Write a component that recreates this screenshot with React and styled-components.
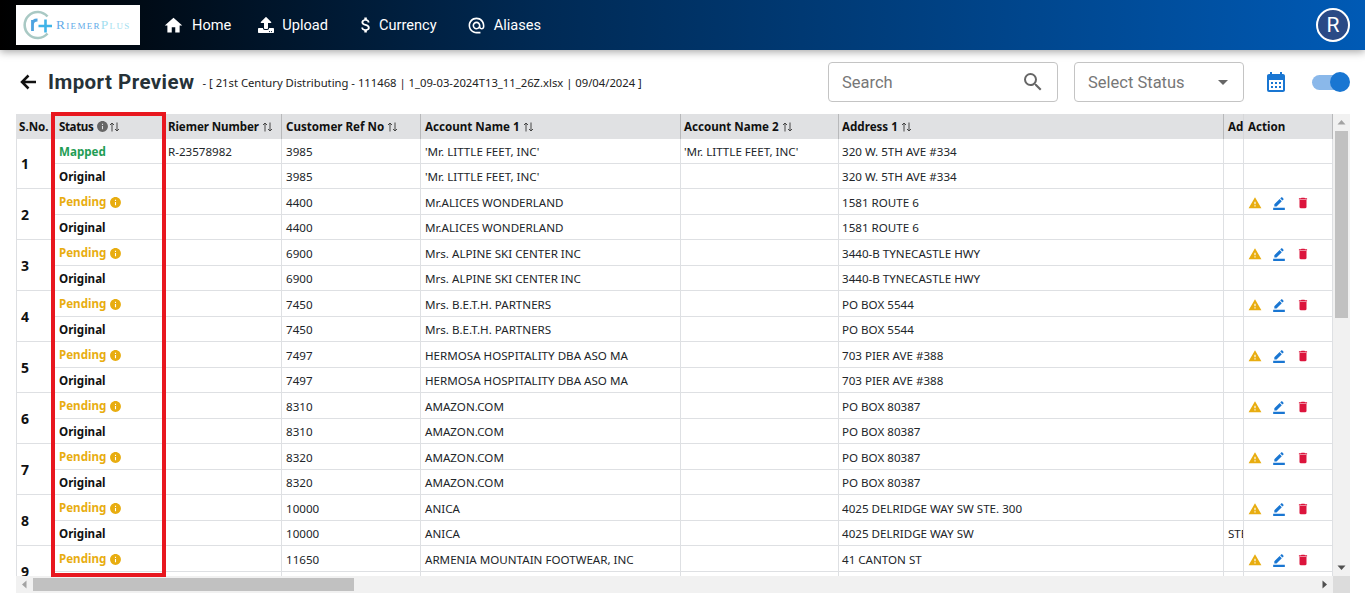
import React from "react";
import styled, { createGlobalStyle } from "styled-components";
import { FaUpload } from "react-icons/fa";
import {
  MdHome, MdAttachMoney, MdAlternateEmail, MdSearch, MdCalendarMonth,
  MdWarning, MdBorderColor, MdDelete, MdInfo, MdArrowDropDown,
} from "react-icons/md";

const Global = createGlobalStyle`
  html, body { margin: 0; padding: 0; background: #fff; overflow: hidden; height: 598px; }
  * { box-sizing: border-box; }
  body { font-family: Roboto, "Liberation Sans", sans-serif; }
`;

const Page = styled.div`display:flex;flex-direction:column;height:598px;`;

const NavBar = styled.header`
  height: 50px; flex: none; display: flex; align-items: center; padding: 0 16px;
  background: linear-gradient(to right, #000 0%, #002a55 40%, #003a75 60%, #005ab5 100%);
  box-shadow: 0 2px 8px rgba(0,0,0,.35); position: relative; z-index: 5;
`;
const LogoBox = styled.div`
  width: 124px; height: 40px; background: #fff; display: flex; align-items: center; gap: 3px; padding-left: 7px;
`;
const LogoText = styled.span`
  font-family: "Liberation Serif", serif; font-size: 13.5px; font-variant: small-caps; letter-spacing: 1.3px; color: #62aae8; white-space: nowrap;
  b { font-weight: 400; color: #a3deef; }
`;
const NavLinks = styled.nav`display:flex;align-items:center;margin-left:23px;flex:1;`;
const NavLink = styled.a`
  display:flex;align-items:center;gap:${p => p.$gap}px;color:#fff;font-size:14.6px;margin-right:${p => p.$mr}px;
  svg { display:block; }
`;
const Avatar = styled.div`
  width: 34px; height: 34px; border-radius: 50%; border: 2px solid #fff; background: #2a4a86; color: #fff;
  display:flex;align-items:center;justify-content:center;font-size:21px;margin-right:-1px;
`;

const TitleRow = styled.div`
  height: 64px; flex: none; display:flex;align-items:center;padding: 0 15px 0 19px;
`;
const Back = styled.svg`display:block;margin-right:11px;flex:none;`;
const Title = styled.h1`margin:0;font-size:20.5px;font-weight:700;color:#263238;letter-spacing:.44px;`;
const Crumb = styled.span`font-family:"Noto Sans",sans-serif;font-size:11.26px;color:#222;margin-left:8px;flex:1;white-space:nowrap;`;
const Field = styled.div`
  width:${p => p.$w}px;height:40px;border:1px solid #c4c4c4;border-radius:4px;display:flex;align-items:center;
  padding:0 ${p => p.$pr}px 0 13px;margin-right:${p => p.$mr}px;color:#777;font-size:16.5px;justify-content:space-between;
  svg{display:block;}
`;
const CalIcon = styled.span`display:flex;color:#1976d2;margin-right:24px;`;
const Toggle = styled.div`width:38px;height:20px;position:relative;`;
const Track = styled.div`position:absolute;left:0;right:3px;top:2.5px;height:15px;border-radius:8px;background:#8ab8ea;`;
const Knob = styled.div`position:absolute;right:0;top:0;width:20px;height:20px;border-radius:50%;background:#1976d2;`;

const TableWrap = styled.div`
  position:relative;margin-left:16px;width:1334px;flex:none;
  display:grid;grid-template-columns:1317px 17px;grid-template-rows:462px 17px;
`;
const Viewport = styled.div`overflow:hidden;`;
const VBar = styled.div`display:flex;flex-direction:column;background:#f1f1f1;`;
const HBar = styled.div`display:flex;background:#f1f1f1;`;
const Corner = styled.div`background:#dcdcdc;`;
const BarBtn = styled.div`flex:none;width:17px;height:17px;display:flex;align-items:center;justify-content:center;`;
const VThumb = styled.div`flex:none;height:${p => p.$size}px;margin:0 2px;background:#c1c1c1;`;
const HThumb = styled.div`flex:none;width:${p => p.$size}px;margin:2px 0;background:#c1c1c1;`;
const Spacer = styled.div`flex:1;`;

const Grid = styled.table`
  border-collapse:separate;border-spacing:0;table-layout:fixed;width:1617px;
  font-family:"Noto Sans",sans-serif;font-size:11.6px;color:#212529;
`;
const Th = styled.th`
  position:sticky;top:0;z-index:${p => p.$action ? 3 : 2};${p => p.$action ? "right:0;" : ""}
  height:25px;background:#e0e1e3;color:#111;text-align:left;font-weight:700;padding:0 0 0 ${p => p.$pl ?? 3}px;
  border-right:1px solid #b8b9bb;${p => p.$action ? "border-left:1px solid #d6d7d9;" : ""}
  white-space:nowrap;overflow:hidden;letter-spacing:${p => p.$ls ?? 0}px;
`;
const Td = styled.td`
  height:${p => p.$h}px;padding:${p => p.$h === 26 ? "1px" : "0"} 0 0 ${p => p.$pl ?? 3}px;border-right:1px solid #dee0e3;border-bottom:1px solid #dee0e3;white-space:nowrap;overflow:hidden;
`;
const NumTd = styled(Td)`border-left:1px solid #dee0e3;padding:0 0 0 4px;font-size:14px;font-weight:700;color:#111;`;
const ActionTd = styled(Td)`position:sticky;right:0;z-index:1;background:#fff;border-left:1px solid #dee0e3;`;
const StatusCell = styled(Td)`font-weight:700;color:${p => p.$c};padding:0 0 0 6px;`;
const StatusInner = styled.span`display:inline-flex;align-items:center;gap:${p => p.$gap}px;svg{display:block;margin-top:${p => p.$nudge}px;}`;
const Sort = styled.svg`display:inline-block;vertical-align:-1px;margin-left:${p => p.$ml ?? 3}px;`;
const Actions = styled.div`display:flex;align-items:center;padding-left:1px;gap:10px;margin-top:1px;svg{display:block;}`;
const RedBox = styled.div`
  position:absolute;left:35px;top:-2px;width:115px;height:465px;border:4px solid #e8171f;pointer-events:none;z-index:6;
`;

const SortIcon = ({ ml }) => (
  <Sort $ml={ml} width="11" height="10" viewBox="0 0 11 10" fill="none" stroke="#444" strokeWidth="1">
    <path d="M3 9.5V1M1 3l2-2 2 2" />
    <path d="M8 .5V9M6 7l2 2 2-2" />
  </Sort>
);

const Tri = ({ d, c }) => (
  <svg width="9" height="9" viewBox="0 0 9 9"><path d={d} fill={c} /></svg>
);

const cols = [37, 113, 116, 139, 260, 158, 385, 319, 90];

const data = [
  ["3985", "'Mr. LITTLE FEET, INC'", "320 W. 5TH AVE #334"],
  ["4400", "Mr.ALICES WONDERLAND", "1581 ROUTE 6"],
  ["6900", "Mrs. ALPINE SKI CENTER INC", "3440-B TYNECASTLE HWY"],
  ["7450", "Mrs. B.E.T.H. PARTNERS", "PO BOX 5544"],
  ["7497", "HERMOSA HOSPITALITY DBA ASO MA", "703 PIER AVE #388"],
  ["8310", "AMAZON.COM", "PO BOX 80387"],
  ["8320", "AMAZON.COM", "PO BOX 80387"],
  ["10000", "ANICA", "4025 DELRIDGE WAY SW STE. 300", "4025 DELRIDGE WAY SW", "STE. 300"],
  ["11650", "ARMENIA MOUNTAIN FOOTWEAR, INC", "41 CANTON ST"],
];

const Record = ({ i, r }) => {
  const mapped = i === 0;
  const topH = mapped ? 25 : 26;
  return (
    <>
      <tr>
        <NumTd rowSpan={2} $h={topH}>{i + 1}</NumTd>
        <StatusCell $h={topH} $c={mapped ? "#1f9d55" : "#e8ad10"}>
          <StatusInner $gap={3} $nudge={2}>{mapped ? "Mapped" : "Pending"}{!mapped && <MdInfo size={13} color="#e8ad10" />}</StatusInner>
        </StatusCell>
        <Td $h={topH} $pl={2}>{mapped ? "R-23578982" : ""}</Td>
        <Td $h={topH} $pl={4}>{r[0]}</Td>
        <Td $h={topH} $pl={4}>{r[1]}</Td>
        <Td $h={topH}>{mapped ? r[1] : ""}</Td>
        <Td $h={topH}>{r[2]}</Td>
        <Td $h={topH} />
        <ActionTd $h={topH}>
          {!mapped && (
            <Actions>
              <MdWarning size={14} color="#e8ad10" />
              <MdBorderColor size={14} color="#1976d2" />
              <MdDelete size={14} color="#dc143c" />
            </Actions>
          )}
        </ActionTd>
      </tr>
      <tr>
        <StatusCell $h={25} $c="#111">Original</StatusCell>
        <Td $h={25} />
        <Td $h={25} $pl={4}>{r[0]}</Td>
        <Td $h={25} $pl={4}>{r[1]}</Td>
        <Td $h={25} />
        <Td $h={25}>{r[3] || r[2]}</Td>
        <Td $h={25} $pl={4}>{r[4]}</Td>
        <ActionTd $h={25} />
      </tr>
    </>
  );
};

export default function App() {
  return (
    <Page>
      <Global />
      <NavBar>
        <LogoBox>
          <svg width="30" height="30" viewBox="0 0 30 30">
            <path d="M24.5 6.5A13 13 0 1 0 24.5 23.5" fill="none" stroke="#a9c9c4" strokeWidth="2.6" />
            <path d="M9.5 10v11M9.5 14.5c0-3 2-4.5 5-4.5" fill="none" stroke="#4da3e0" strokeWidth="2.8" />
            <path d="M15.5 16h13.5M22.5 9.5v13" fill="none" stroke="#3fb4e8" strokeWidth="2.6" />
          </svg>
          <LogoText>Riemer<b>Plus</b></LogoText>
        </LogoBox>
        <NavLinks>
          <NavLink $gap={8} $mr={27}><MdHome size={21} />Home</NavLink>
          <NavLink $gap={8} $mr={28}><FaUpload size={16} />Upload</NavLink>
          <NavLink $gap={3} $mr={30}><MdAttachMoney size={20} />Currency</NavLink>
          <NavLink $gap={8} $mr={0}><MdAlternateEmail size={19} />Aliases</NavLink>
        </NavLinks>
        <Avatar>R</Avatar>
      </NavBar>
      <TitleRow>
        <Back width="18" height="18" viewBox="0 0 18 18" fill="none" stroke="#111" strokeWidth="2.5">
          <path d="M17 9H3M9.5 2.5 3 9l6.5 6.5" />
        </Back>
        <Title>Import Preview</Title>
        <Crumb>- [ 21st Century Distributing - 111468 | 1_09-03-2024T13_11_26Z.xlsx | 09/04/2024 ]</Crumb>
        <Field $w={230} $pr={12} $mr={16}>Search<MdSearch size={24} color="#666" /></Field>
        <Field $w={170} $pr={8} $mr={20}>Select Status<MdArrowDropDown size={24} color="#666" /></Field>
        <CalIcon><MdCalendarMonth size={24} /></CalIcon>
        <Toggle><Track /><Knob /></Toggle>
      </TitleRow>
      <TableWrap>
        <Viewport>
          <Grid>
            <colgroup>{cols.map((w, i) => <col key={i} style={{ width: w }} />)}</colgroup>
            <thead>
              <tr>
                <Th>S.No.</Th>
                <Th $pl={6} $ls={-0.4}><StatusInner $gap={3} $nudge={0}>Status <MdInfo size={13} color="#666" /></StatusInner><SortIcon ml={0} /></Th>
                <Th $pl={2} $ls={-0.1}>Riemer Number<SortIcon /></Th>
                <Th $pl={4}>Customer Ref No<SortIcon /></Th>
                <Th $pl={4}>Account Name 1<SortIcon /></Th>
                <Th>Account Name 2<SortIcon /></Th>
                <Th>Address 1<SortIcon /></Th>
                <Th $pl={4}>Address 2<SortIcon /></Th>
                <Th $action $pl={4}>Action</Th>
              </tr>
            </thead>
            <tbody>
              {data.map((r, i) => <Record key={i} i={i} r={r} />)}
            </tbody>
          </Grid>
        </Viewport>
        <VBar>
          <BarBtn><Tri d="M4.5 2 8.5 6.5H.5Z" c="#a3a3a3" /></BarBtn>
          <VThumb $size={187} />
          <Spacer />
          <BarBtn><Tri d="M.5 2.5h8L4.5 7Z" c="#505050" /></BarBtn>
        </VBar>
        <HBar>
          <BarBtn><Tri d="M2 4.5 6.5.5v8Z" c="#a3a3a3" /></BarBtn>
          <HThumb $size={321} />
          <Spacer />
          <BarBtn><Tri d="M2.5.5v8L7 4.5Z" c="#505050" /></BarBtn>
        </HBar>
        <Corner />
        <RedBox />
      </TableWrap>
    </Page>
  );
}
